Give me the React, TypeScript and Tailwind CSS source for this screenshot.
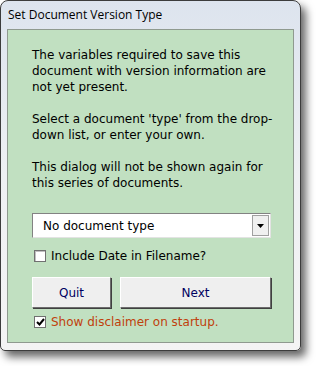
import React from "react";

export default function App() {
  const font = { fontFamily: "Tahoma, 'DejaVu Sans', Verdana, sans-serif" };
  return (
    <div className="w-[316px] h-[366px] bg-white relative overflow-hidden">
      <div className="w-[301px] h-[351px] border border-[#3c3c3c] rounded-t-[8px] rounded-b-[5px] bg-gradient-to-b from-[#dde4ee] via-[#eef0f3] to-[#f4f4f4] shadow-[5px_6px_8px_rgba(0,0,0,0.6)] flex flex-col">
        <div className="h-[28px] pl-[7px] flex items-center text-[12px] text-black" style={{ fontFamily: "'Open Sans', 'Noto Sans', sans-serif" }}>
          Set Document Version Type
        </div>
        <div className="mx-[6px] mb-[7px] flex-1 border border-[#8f9a8f] bg-[#c1e0c1] pl-[24px] pr-[12px] pt-[17px] text-[12px] leading-[16px] text-black" style={font}>
          <p>The variables required to save this<br />document with version information are<br />not yet present.</p>
          <p className="mt-[16px]">Select a document 'type' from the drop-<br />down list, or enter your own.</p>
          <p className="mt-[16px]">This dialog will not be shown again for<br />this series of documents.</p>
          <div className="mt-[22px] h-[25px] w-[239px] bg-white border border-[#828282] border-r-[#e3e3e3] border-b-[#e3e3e3] flex items-center">
            <span className="flex-1 pl-[10px] text-[12px] text-black">No document type</span>
            <div className="h-[21px] w-[17px] mr-[1px] bg-[#f0f0f0] border border-[#a0a0a0] flex items-center justify-center">
              <svg width="7" height="4" viewBox="0 0 7 4"><path d="M0 0h7L3.5 4z" fill="#000" /></svg>
            </div>
          </div>
          <label className="mt-[11px] flex items-center gap-[5px] h-[14px]">
            <span className="w-[12px] h-[12px] ml-[2px] bg-white border border-[#707070] shadow-[inset_1px_1px_0_#c0c0c0]" />
            <span className="text-[12px] text-black">Include Date in Filename?</span>
          </label>
          <div className="mt-[14px] flex gap-[9px]">
            <button className="w-[79px] h-[31px] bg-[#efefef] border border-white border-r-[#6c6c6c] border-b-[#6c6c6c] shadow-[1px_1px_0_#404040] text-[12px] text-[#000060]">Quit</button>
            <button className="w-[151px] h-[31px] bg-[#efefef] border border-white border-r-[#6c6c6c] border-b-[#6c6c6c] shadow-[1px_1px_0_#404040] text-[12px] text-[#000060]">Next</button>
          </div>
          <label className="mt-[8px] flex items-center gap-[5px] h-[12px]">
            <span className="w-[12px] h-[12px] ml-[2px] bg-white border border-[#707070] flex items-center justify-center">
              <svg width="9" height="8" viewBox="0 0 9 8"><path d="M1 4l2.5 2.5L8 1" stroke="#000" strokeWidth="2" fill="none" /></svg>
            </span>
            <span className="text-[12px] text-[#c0400c]">Show disclaimer on startup.</span>
          </label>
        </div>
      </div>
    </div>
  );
}
